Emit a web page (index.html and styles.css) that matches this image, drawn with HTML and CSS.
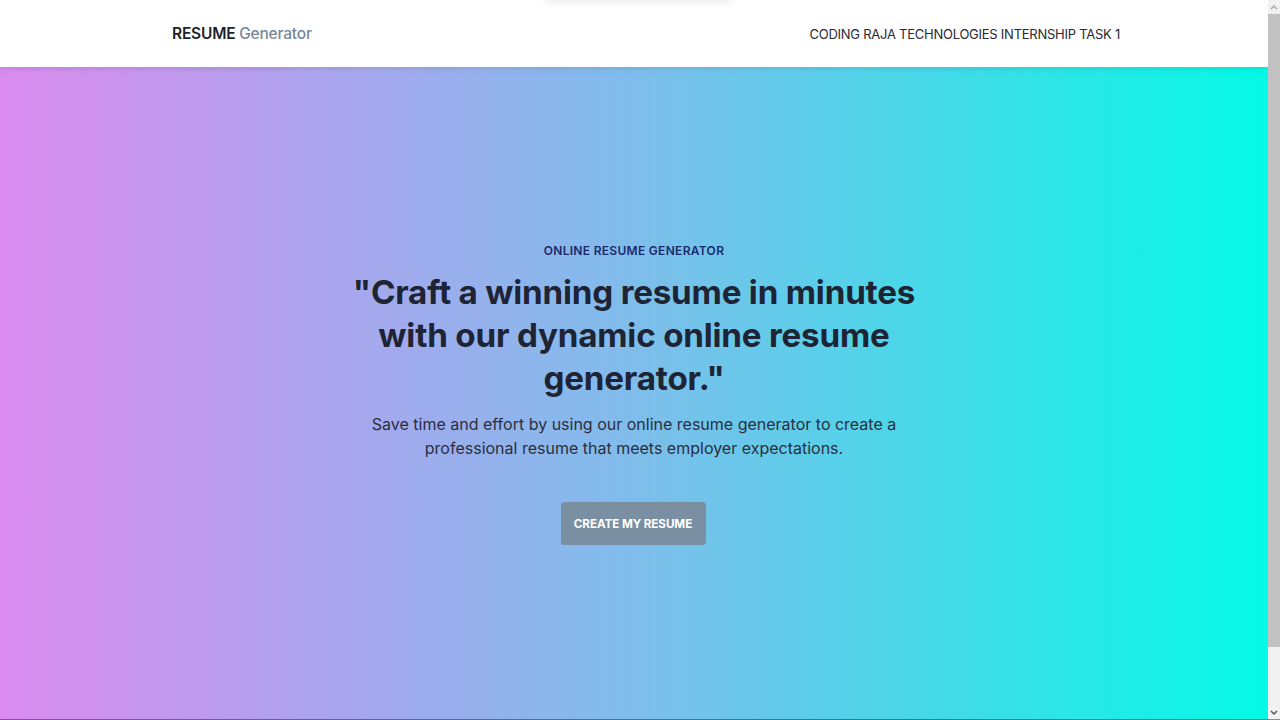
FILE: index.html
```html
<!DOCTYPE html>
<html lang="en">
<head>
<meta charset="utf-8">
<title>Resume Generator</title>
<link rel="stylesheet" href="styles.css">
</head>
<body>
<div class="page">
  <header class="topbar">
    <div class="topbar-inner">
      <a class="brand" href="#"><span class="brand-strong">RESUME</span> <span class="brand-soft">Generator</span></a>
      <span class="nav-text">CODING RAJA TECHNOLOGIES INTERNSHIP TASK 1</span>
    </div>
    <div class="ghost-shadow"></div>
  </header>
  <main class="hero">
    <div class="hero-content">
      <p class="eyebrow">ONLINE RESUME GENERATOR</p>
      <h1 class="headline">"Craft a winning resume in minutes with our dynamic online resume generator."</h1>
      <p class="lead">Save time and effort by using our online resume generator to create a professional resume that meets employer expectations.</p>
      <a class="cta" href="#">CREATE MY RESUME</a>
    </div>
  </main>
</div>
<div class="scrollbar" aria-hidden="true">
  <div class="sb-arrow"><svg width="8" height="5" viewBox="0 0 8 5"><path d="M1 4 L4 1 L7 4" fill="none" stroke="#a3a3a3" stroke-width="1.4"/></svg></div>
  <div class="sb-thumb"></div>
  <div class="sb-track"></div>
  <div class="sb-arrow"><svg width="8" height="5" viewBox="0 0 8 5"><path d="M1 1 L4 4 L7 1" fill="none" stroke="#505050" stroke-width="1.4"/></svg></div>
</div>
</body>
</html>
```
FILE: styles.css
```css
* { box-sizing: border-box; }
html, body { margin: 0; padding: 0; }
body {
  font-family: "Inter", "Noto Sans", sans-serif;
  color: #1f2533;
  background: #fff;
  display: flex;
  height: 720px;
  overflow: hidden;
}
.page {
  flex: 1;
  min-width: 0;
  display: flex;
  flex-direction: column;
  overflow: hidden;
}
.scrollbar {
  width: 12px;
  flex: none;
  display: flex;
  flex-direction: column;
  background: #f1f1f1;
  border-bottom: 1px solid #8a8a8a;
}
.sb-arrow {
  height: 14px;
  display: flex;
  align-items: center;
  justify-content: center;
  background: #f1f1f1;
}
.sb-thumb {
  height: 633px;
  background: #c1c1c1;
}
.sb-track { flex: 1; background: #f1f1f1; }
.topbar {
  position: relative;
  z-index: 2;
  height: 67px;
  flex: none;
  background: #fff;
  box-shadow: 0 1px 6px rgba(0,0,0,0.12);
}
.topbar-inner {
  height: 100%;
  display: flex;
  align-items: center;
  justify-content: space-between;
  padding: 0 148px 0 172px;
}
.brand {
  text-decoration: none;
  font-size: 15.5px;
  font-weight: 600;
  letter-spacing: -0.2px;
}
.brand-strong { color: #1f1f2b; }
.brand-soft { color: #778797; font-weight: 500; }
.nav-text {
  font-size: 13px;
  color: #2a2a33;
  letter-spacing: -0.25px;
}
.ghost-shadow {
  position: absolute;
  top: -12px;
  left: 545px;
  width: 188px;
  height: 12px;
  box-shadow: 0 2px 8px rgba(0,0,0,0.08);
}
.hero {
  flex: 1;
  background: linear-gradient(to right, #da8bef 0%, #7fbdeb 50%, #04f9e5 100%);
  box-shadow: inset 0 -1px 0 rgba(0,0,0,0.4);
  display: flex;
  justify-content: center;
  padding-top: 176px;
}
.hero-content {
  width: 620px;
  display: flex;
  flex-direction: column;
  align-items: center;
  text-align: center;
}
.eyebrow {
  margin: 0;
  font-size: 12px;
  font-weight: 600;
  letter-spacing: 0.3px;
  color: #1c2a6b;
  line-height: 16px;
}
.headline {
  margin: 12px 0 0;
  font-size: 33.2px;
  line-height: 43px;
  font-weight: 700;
  letter-spacing: -0.2px;
  color: #1e2433;
  width: 600px;
}
.lead {
  margin: 12px 0 0;
  font-size: 16px;
  line-height: 24px;
  color: #2b2f3d;
  width: 560px;
}
.cta {
  margin-top: 42px;
  margin-left: -2px;
  display: inline-flex;
  align-items: center;
  justify-content: center;
  width: 145px;
  height: 43px;
  background: #7a8fa2;
  color: #fff;
  font-size: 11.7px;
  font-weight: 700;
  text-decoration: none;
  border-radius: 3px;
  letter-spacing: -0.1px;
}
```
